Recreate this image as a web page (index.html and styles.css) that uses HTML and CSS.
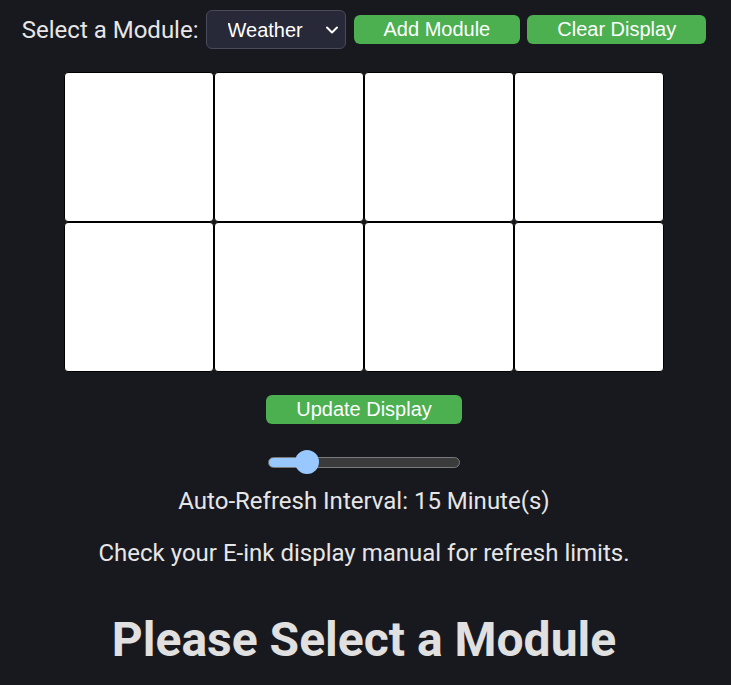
FILE: index.html
```html
<!DOCTYPE html>
<html lang="en">
<head>
<meta charset="utf-8">
<title>E-ink Display</title>
<link rel="stylesheet" href="styles.css">
</head>
<body>
  <div class="toolbar">
    <label class="toolbar-label" for="module">Select a Module:</label>
    <div class="select-wrap">
      <select id="module" class="module-select">
        <option>Weather</option>
        <option>Calendar</option>
        <option>News</option>
      </select>
      <svg class="chevron" width="12" height="8" viewBox="0 0 12 8" aria-hidden="true"><path d="M1 1.5 L6 6.5 L11 1.5" fill="none" stroke="#ffffff" stroke-width="2" stroke-linecap="round" stroke-linejoin="round"/></svg>
    </div>
    <button class="btn">Add Module</button>
    <button class="btn">Clear Display</button>
  </div>

  <div class="grid">
    <div class="cell"></div>
    <div class="cell"></div>
    <div class="cell"></div>
    <div class="cell"></div>
    <div class="cell"></div>
    <div class="cell"></div>
    <div class="cell"></div>
    <div class="cell"></div>
  </div>

  <div class="actions">
    <button class="btn">Update Display</button>
  </div>

  <div class="slider-row">
    <input class="slider" type="range" min="5" max="70" value="15" style="--fill: 20%">
  </div>

  <p class="interval">Auto-Refresh Interval: 15 Minute(s)</p>
  <p class="note">Check your E-ink display manual for refresh limits.</p>

  <h1 class="title">Please Select a Module</h1>
</body>
</html>
```

FILE: styles.css
```css
html, body {
  margin: 0;
  padding: 0;
}
body {
  background: #18181f;
  color: #e6e6e6;
  font-family: Roboto, "Noto Sans", sans-serif;
  text-align: center;
  padding: 10px 3px 0 0;
  min-height: 685px;
  box-sizing: border-box;
}
.toolbar {
  display: flex;
  justify-content: center;
  align-items: center;
  gap: 7px;
  height: 39px;
}
.toolbar-label {
  font-size: 24px;
  color: #e6e6e6;
}
.select-wrap {
  position: relative;
  display: flex;
  margin-right: 1px;
}
.module-select {
  -webkit-appearance: none;
  appearance: none;
  width: 140px;
  height: 39px;
  box-sizing: border-box;
  padding: 0 0 0 21px;
  background: #272838;
  color: #ffffff;
  border: 1px solid #4a4b5a;
  border-radius: 6px;
  font-family: "Liberation Sans", Arial, sans-serif;
  font-size: 20px;
  outline: none;
}
.chevron {
  position: absolute;
  right: 8px;
  top: 16px;
  pointer-events: none;
}
.btn {
  background: #4caf50;
  color: #ffffff;
  border: none;
  border-radius: 6px;
  font-family: "Liberation Sans", Arial, sans-serif;
  font-size: 20px;
  line-height: 23px;
  padding: 3px 30px;
  height: 29px;
  cursor: pointer;
}
.grid {
  width: 600px;
  margin: 23px auto 0;
  display: grid;
  grid-template-columns: repeat(4, 150px);
  grid-template-rows: repeat(2, 150px);
}
.cell {
  background: #ffffff;
  border: 1px solid #000000;
  border-radius: 4px;
  box-sizing: border-box;
}
.actions {
  margin-top: 23px;
  display: flex;
  justify-content: center;
}
.slider-row {
  margin-top: 27px;
  display: flex;
  justify-content: center;
  height: 22px;
  align-items: center;
}
.slider {
  -webkit-appearance: none;
  appearance: none;
  width: 192px;
  height: 24px;
  margin: 0;
  background: transparent;
  outline: none;
}
.slider::-webkit-slider-runnable-track {
  height: 11px;
  box-sizing: border-box;
  border-radius: 6px;
  border: 1px solid #7a7a7a;
  background: linear-gradient(to right, #99c8ff var(--fill), #3b3b3b var(--fill));
}
.slider::-webkit-slider-thumb {
  -webkit-appearance: none;
  appearance: none;
  width: 24px;
  height: 24px;
  border-radius: 50%;
  background: #99c8ff;
  border: none;
  margin-top: -7.5px;
}
.interval {
  font-size: 24px;
  line-height: 28px;
  margin: 14px 0 0;
}
.note {
  font-size: 24px;
  line-height: 28px;
  margin: 24px 0 0;
}
.title {
  font-family: Roboto, "Noto Sans", sans-serif;
  font-weight: 700;
  font-size: 48px;
  line-height: 56px;
  margin: 45px 0 0;
  color: #e0e0e0;
}
```
